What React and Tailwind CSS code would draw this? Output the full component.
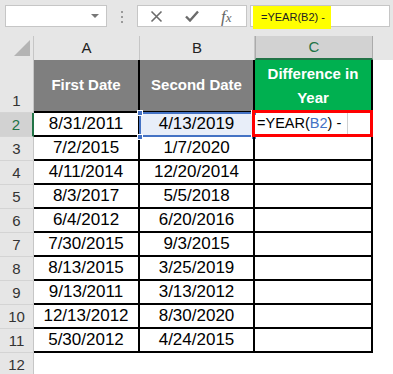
import React from "react";

const ROWS = [
  ["8/31/2011", "4/13/2019"],
  ["7/2/2015", "1/7/2020"],
  ["4/11/2014", "12/20/2014"],
  ["8/3/2017", "5/5/2018"],
  ["6/4/2012", "6/20/2016"],
  ["7/30/2015", "9/3/2015"],
  ["8/13/2015", "3/25/2019"],
  ["9/13/2011", "3/13/2012"],
  ["12/13/2012", "8/30/2020"],
  ["5/30/2012", "4/24/2015"],
];

const font = { fontFamily: '"Liberation Sans", Arial, sans-serif' };

const RowHead = ({ children, active, className = "" }) => (
  <div
    className={`flex w-[34px] shrink-0 items-end justify-center border-b border-[#d4d4d4] pb-[1px] text-[15px] leading-[20px] ${
      active
        ? "border-r-2 border-r-[#217346] bg-[#d2d2d2] text-[#217346]"
        : "border-r border-r-[#c6c6c6] bg-[#e6e6e6] text-[#333]"
    } ${className}`}
  >
    {children}
  </div>
);

const Handle = ({ className }) => (
  <span className={`absolute h-[6px] w-[6px] border border-white bg-[#4472c4] ${className}`} />
);

export default function App() {
  return (
    <div className="h-[374px] w-[393px] overflow-hidden bg-white" style={font}>
      {/* ribbon / formula bar */}
      <div className="flex h-[36px] items-start bg-[#e6e6e6] pt-[5px] pl-[5px]">
        <div className="relative h-[22px] w-[102px] border border-[#c6c6c6] bg-white">
          <span className="absolute right-[7px] top-[8px] h-0 w-0 border-x-[4px] border-t-[4px] border-x-transparent border-t-[#777]" />
        </div>
        <div className="ml-[14px] mt-[6px] flex flex-col gap-[3px]">
          <span className="h-[2px] w-[2px] bg-[#9a9a9a]" />
          <span className="h-[2px] w-[2px] bg-[#9a9a9a]" />
          <span className="h-[2px] w-[2px] bg-[#9a9a9a]" />
        </div>
        <div className="ml-[14px] flex h-[22px] w-[110px] items-center border border-[#c6c6c6] bg-white pl-[12px]">
          <svg width="13" height="13" viewBox="0 0 13 13" className="shrink-0">
            <path d="M1.5 1.5 L11.5 11.5 M11.5 1.5 L1.5 11.5" stroke="#6b6b6b" strokeWidth="1.6" fill="none" />
          </svg>
          <svg width="14" height="12" viewBox="0 0 14 12" className="ml-[22px] shrink-0">
            <path d="M1 6.5 L5 10.5 L13 1.5" stroke="#6b6b6b" strokeWidth="2.4" fill="none" />
          </svg>
          <span
            className="ml-[22px] text-[17px] italic leading-none text-[#666]"
            style={{ fontFamily: '"Liberation Serif", "Times New Roman", serif' }}
          >
            f<span className="text-[13px]">x</span>
          </span>
        </div>
        <div className="ml-[3px] h-[22px] w-[140px] border border-[#c6c6c6] bg-white">
          <div className="ml-[2px] flex h-[23px] w-[78px] items-center bg-[#ffff00] pl-[8px] text-[11px] text-[#222]">
            =YEAR(B2) -
          </div>
        </div>
      </div>

      {/* column headers */}
      <div className="flex h-[24px] bg-[#e6e6e6] text-[15px] text-[#222]">
        <div className="relative w-[34px] shrink-0 border-r border-[#c6c6c6]">
          <span className="absolute bottom-[4px] right-[3px] h-0 w-0 border-b-[16px] border-l-[16px] border-b-[#b4b4b4] border-l-transparent" />
        </div>
        <div className="flex w-[106px] shrink-0 items-center justify-center border-r border-[#c6c6c6]">A</div>
        <div className="flex w-[115px] shrink-0 items-center justify-center border-r border-[#c6c6c6]">B</div>
        <div className="flex w-[118px] shrink-0 items-center justify-center border-x border-b-2 border-x-[#ababab] border-b-[#217346] bg-[#d2d2d2] text-[#217346]">
          C
        </div>
        <div className="flex-1" />
      </div>

      {/* row 1 : headings */}
      <div className="flex h-[53px]">
        <RowHead>1</RowHead>
        <div className="flex w-[106px] shrink-0 items-center justify-center border-r-2 border-b-2 border-black bg-[#7f7f7f] text-[15px] font-bold text-white">
          First Date
        </div>
        <div className="flex w-[115px] shrink-0 items-center justify-center border-r-2 border-b-2 border-black bg-[#7f7f7f] text-[15px] font-bold text-white">
          Second Date
        </div>
        <div className="flex w-[118px] shrink-0 items-center justify-center border-r-2 border-b-2 border-black bg-[#00b050] text-center text-[15px] font-bold leading-[24px] text-white">
          Difference in
          <br />
          Year
        </div>
      </div>

      {/* data rows */}
      {ROWS.map(([a, b], i) => {
        const n = i + 2;
        const first = i === 0;
        return (
          <div key={n} className="flex h-[24px]">
            <RowHead active={first}>{n}</RowHead>
            <div className="flex w-[106px] shrink-0 items-center justify-center border-r-2 border-b-2 border-black text-[17px] text-black">
              {a}
            </div>
            <div
              className={`relative flex w-[115px] shrink-0 items-center justify-center border-r-2 border-b-2 border-black text-[17px] text-black ${
                first ? "bg-[#e8eef9]" : ""
              }`}
            >
              {first && (
                <>
                  <span className="absolute -left-[1px] -top-[1px] -bottom-[2px] -right-[1px] border-2 border-[#4472c4]" />
                  <Handle className="-left-[3px] -top-[3px]" />
                  <Handle className="-right-[4px] -top-[3px]" />
                  <Handle className="-left-[3px] -bottom-[5px]" />
                  <Handle className="-right-[4px] -bottom-[5px]" />
                </>
              )}
              <span className="relative">{b}</span>
            </div>
            <div className="relative flex w-[118px] shrink-0 items-center border-r-2 border-b-2 border-black text-black">
              {first && (
                <>
                  <span className="flex h-full items-center border-r border-[#d0d0d0] pl-[2px] pr-[6px] text-[14.5px]">
                    =YEAR(<span className="text-[#4472c4]">B2</span>) -
                  </span>
                  <span className="absolute -left-[3px] -top-[3px] -right-[2px] -bottom-[2px] border-[3px] border-[#ff0000]" />
                </>
              )}
            </div>
          </div>
        );
      })}

      {/* row 12 */}
      <div className="flex h-[24px]">
        <RowHead>12</RowHead>
        <div className="flex-1" />
      </div>
    </div>
  );
}
